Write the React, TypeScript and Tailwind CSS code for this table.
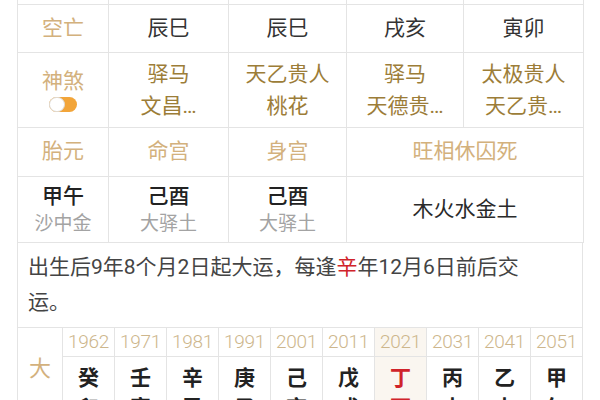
const label = "text-[#d3b17d]";
const star = "text-[#9c7d38]";

const cell = "flex flex-col items-center justify-center border-r border-b border-[#e4e4e4]";

const dayun = [
  { year: "1962", gan: "癸", zhi: "卯" },
  { year: "1971", gan: "壬", zhi: "寅" },
  { year: "1981", gan: "辛", zhi: "丑" },
  { year: "1991", gan: "庚", zhi: "子" },
  { year: "2001", gan: "己", zhi: "亥" },
  { year: "2011", gan: "戊", zhi: "戌" },
  { year: "2021", gan: "丁", zhi: "酉", current: true },
  { year: "2031", gan: "丙", zhi: "申" },
  { year: "2041", gan: "乙", zhi: "未" },
  { year: "2051", gan: "甲", zhi: "午" },
];

function Toggle() {
  return (
    <div className="mt-[4px] flex h-[15px] w-[28px] items-center rounded-full bg-[#f2a53a]">
      <div className="h-[15px] w-[16px] rounded-full border border-[#dcdcdc] bg-white" />
    </div>
  );
}

export default function App() {
  return (
    <div
      className="h-[400px] w-[600px] overflow-hidden bg-white"
      style={{ fontFamily: "Roboto, 'Noto Sans CJK SC', sans-serif" }}
    >
      <div className="ml-[17px] w-[566px] border-l border-[#e4e4e4] text-[21px] text-[#333]">
        {/* pillars table */}
        <div className="grid grid-cols-[91px_120px_118px_117px_120px]">
          {/* cut-off row */}
          <div className={`${cell} h-[5px]`} />
          <div className={`${cell} h-[5px]`} />
          <div className={`${cell} h-[5px]`} />
          <div className={`${cell} h-[5px]`} />
          <div className={`${cell} h-[5px]`} />

          {/* 空亡 */}
          <div className={`${cell} h-[48px] ${label}`}>空亡</div>
          <div className={`${cell} h-[48px]`}>辰巳</div>
          <div className={`${cell} h-[48px]`}>辰巳</div>
          <div className={`${cell} h-[48px]`}>戌亥</div>
          <div className={`${cell} h-[48px]`}>寅卯</div>

          {/* 神煞 */}
          <div className={`${cell} h-[75px] ${label}`}>
            <span className="leading-[24px]">神煞</span>
            <Toggle />
          </div>
          <div className={`${cell} h-[75px] ${star} leading-[32px]`}>
            <span>驿马</span>
            <span>文昌…</span>
          </div>
          <div className={`${cell} h-[75px] ${star} leading-[32px]`}>
            <span>天乙贵人</span>
            <span>桃花</span>
          </div>
          <div className={`${cell} h-[75px] ${star} leading-[32px]`}>
            <span>驿马</span>
            <span>天德贵…</span>
          </div>
          <div className={`${cell} h-[75px] ${star} leading-[32px]`}>
            <span>太极贵人</span>
            <span>天乙贵…</span>
          </div>
        </div>

        <div className="grid grid-cols-[91px_120px_118px_237px]">
          {/* 胎元 */}
          <div className={`${cell} h-[49px] ${label}`}>胎元</div>
          <div className={`${cell} h-[49px] ${label}`}>命宫</div>
          <div className={`${cell} h-[49px] ${label}`}>身宫</div>
          <div className={`${cell} h-[49px] ${label}`}>旺相休囚死</div>

          <div className={`${cell} h-[66px] leading-[27px]`}>
            <span className="font-medium text-[#222]">甲午</span>
            <span className="text-[19px] text-[#a3a3a3]">沙中金</span>
          </div>
          <div className={`${cell} h-[66px] leading-[27px]`}>
            <span className="font-medium text-[#222]">己酉</span>
            <span className="text-[19px] text-[#a3a3a3]">大驿土</span>
          </div>
          <div className={`${cell} h-[66px] leading-[27px]`}>
            <span className="font-medium text-[#222]">己酉</span>
            <span className="text-[19px] text-[#a3a3a3]">大驿土</span>
          </div>
          <div className={`${cell} h-[66px] text-[#2a2a2a]`}>木火水金土</div>
        </div>

        {/* start of luck */}
        <div className="h-[85px] border-r border-b border-[#e4e4e4] px-[10px] pt-[7px] text-[21px] leading-[35px] text-[#444]">
          出生后9年8个月2日起大运，每逢<span className="text-[#d0232a]">辛</span>年12月6日前后交
          <br />
          运。
        </div>

        {/* 大运 */}
        <div className="grid grid-cols-[45px_repeat(10,1fr)]">
          <div className="row-span-2 flex flex-col items-center border-r border-[#e4e4e4] pt-[24px] text-[22px] leading-[34px] text-[#d3b17d]">
            <span>大</span>
            <span className="mt-[16px]">运</span>
          </div>
          {dayun.map((d) => (
            <div
              key={d.year}
              className={`flex h-[29px] items-center justify-center border-r border-b border-[#e4e4e4] text-[19px] font-light tracking-[-0.3px] text-[#cdb68c] ${
                d.current ? "bg-[#faf6f0]" : ""
              }`}
            >
              {d.year}
            </div>
          ))}
          {dayun.map((d) => (
            <div
              key={d.year + "gz"}
              className={`flex h-[80px] flex-col items-center border-r border-[#e4e4e4] pt-[6px] text-[21px] font-bold leading-[30px] ${
                d.current ? "bg-[#faf6f0] text-[#d0232a]" : "text-[#222]"
              }`}
            >
              <span>{d.gan}</span>
              <span>{d.zhi}</span>
            </div>
          ))}
        </div>
      </div>
    </div>
  );
}
